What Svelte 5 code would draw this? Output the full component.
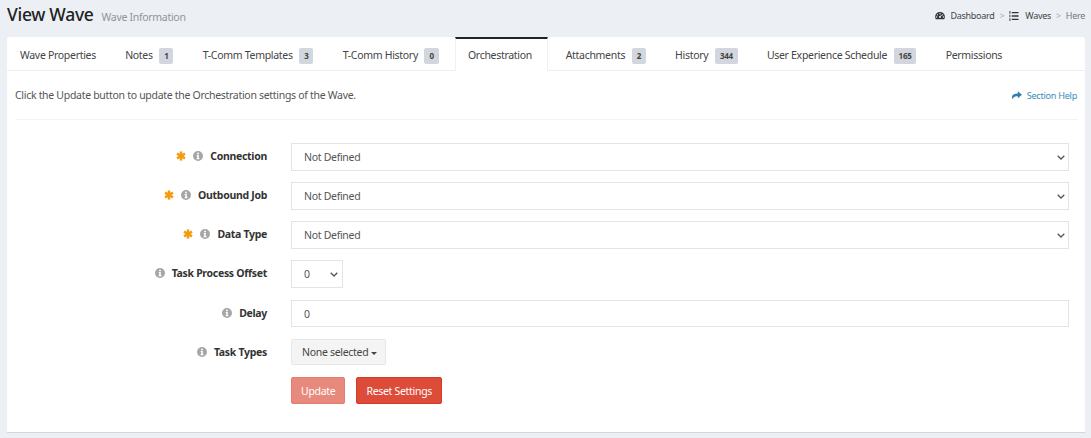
<script>
  const tabs = [
    { label: 'Wave Properties' },
    { label: 'Notes', count: 1 },
    { label: 'T-Comm Templates', count: 3 },
    { label: 'T-Comm History', count: 0 },
    { label: 'Orchestration', active: true },
    { label: 'Attachments', count: 2 },
    { label: 'History', count: 344 },
    { label: 'User Experience Schedule', count: 165 },
    { label: 'Permissions' }
  ];
</script>

{#snippet info()}
  <svg class="info" viewBox="0 0 10 10" aria-hidden="true">
    <path fill-rule="evenodd" d="M5 0a5 5 0 1 1 0 10A5 5 0 0 1 5 0zM4.100 1.700v1.500h1.800V1.700zM3.600 4.100v1h.6v2h-.6v1.100h2.800V7.100h-.6V4.100z" />
  </svg>
{/snippet}

{#snippet star()}
  <svg class="star" viewBox="0 0 12 12" aria-hidden="true">
    <g stroke="#f39c12" stroke-width="3">
      <line x1="6" y1="0.500" x2="6" y2="11.500" />
      <line x1="1.200" y1="3.200" x2="10.800" y2="8.800" />
      <line x1="1.200" y1="8.800" x2="10.800" y2="3.200" />
    </g>
  </svg>
{/snippet}

<div class="page">
  <header class="top">
    <div class="heading">
      <h1>View Wave</h1>
      <small>Wave Information</small>
    </div>
    <nav class="crumbs">
      <svg class="crumb-icon" viewBox="0 0 14 11" aria-hidden="true">
        <path fill-rule="evenodd" d="M7 .5a6.800 6.800 0 0 1 6.800 6.800c0 1.300-.3 2.400-.9 3.400H1.100C.5 9.700.2 8.600.2 7.300A6.800 6.800 0 0 1 7 .5zM7 2a1 1 0 1 0 0 2 1 1 0 0 0 0-2zM3.400 3.600a1 1 0 1 0 0 2 1 1 0 0 0 0-2zM10.600 3.600a1 1 0 1 0 0 2 1 1 0 0 0 0-2zM2.200 6.700a1 1 0 1 0 0 2 1 1 0 0 0 0-2zM11.800 6.700a1 1 0 1 0 0 2 1 1 0 0 0 0-2zM9.300 4.300 7.200 6.300a1.300 1.300 0 1 0 .9.900l1.700-2.500z" />
      </svg>
      <span class="crumb">Dashboard</span>
      <span class="sep">&gt;</span>
      <svg class="crumb-icon list" viewBox="0 0 10 11" aria-hidden="true">
        <path d="M0 0h1v3H0zM0 4h1v3H0zM0 8h1v3H0zM2.500 1H10v1.600H2.500zM2.500 4.700H10v1.600H2.500zM2.500 8.400H10V10H2.500z" />
      </svg>
      <span class="crumb">Waves</span>
      <span class="sep">&gt;</span>
      <span class="here">Here</span>
    </nav>
  </header>

  <section class="card">
    <ul class="tabs">
      {#each tabs as tab}
        <li class="tab" class:active={tab.active}>
          {tab.label}
          {#if tab.count !== undefined}
            <span class="badge">{tab.count}</span>
          {/if}
        </li>
      {/each}
    </ul>

    <div class="body">
      <div class="intro">
        <p>Click the Update button to update the Orchestration settings of the Wave.</p>
        <a class="help" href="#help">
          <svg viewBox="0 0 12 10" aria-hidden="true">
            <path d="M7 0l5 4.200L7 8.400V6C4 6 1.800 6.600.6 9.600.2 8.700 0 7.800 0 7c0-3 2.600-4.400 7-4.500z" />
          </svg>
          Section Help
        </a>
      </div>

      <form class="form">
        <div class="row">
          <div class="label">{@render star()}{@render info()}<label for="conn">Connection</label></div>
          <select id="conn" class="field"><option>Not Defined</option></select>
        </div>
        <div class="row">
          <div class="label">{@render star()}{@render info()}<label for="job">Outbound Job</label></div>
          <select id="job" class="field"><option>Not Defined</option></select>
        </div>
        <div class="row">
          <div class="label">{@render star()}{@render info()}<label for="type">Data Type</label></div>
          <select id="type" class="field"><option>Not Defined</option></select>
        </div>
        <div class="row">
          <div class="label">{@render info()}<label for="offset">Task Process Offset</label></div>
          <select id="offset" class="field small"><option>0</option></select>
        </div>
        <div class="row delay">
          <div class="label">{@render info()}<label for="delay">Delay</label></div>
          <input id="delay" class="field" value="0" />
        </div>
        <div class="row types">
          <div class="label">{@render info()}<span>Task Types</span></div>
          <button type="button" class="multi">None selected <span class="caret"></span></button>
        </div>
        <div class="row actions">
          <button type="button" class="btn disabled">Update</button>
          <button type="button" class="btn">Reset Settings</button>
        </div>
      </form>
    </div>
  </section>
</div>

<style>
  :global(body) {
    margin: 0;
    background: #ecf0f5;
  }
  .page {
    height: 438px;
    padding: 0 6px 0 7px;
    box-sizing: border-box;
    overflow: hidden;
    font-family: "Noto Sans", sans-serif;
    font-size: 10.5px;
    letter-spacing: -0.3px;
    color: #444;
  }
  .top {
    height: 37px;
    display: flex;
    justify-content: space-between;
    align-items: center;
    padding-bottom: 6px;
    box-sizing: border-box;
  }
  .heading {
    display: flex;
    align-items: baseline;
    gap: 8px;
    padding-bottom: 4px;
  }
  h1 {
    margin: 0;
    font-size: 17.5px;
    font-weight: 500;
    color: #222;
  }
  small {
    font-size: 10.5px;
    color: #8f949b;
  }
  .crumbs {
    display: flex;
    align-items: center;
    font-size: 9px;
    color: #444;
  }
  .crumb-icon {
    width: 10px;
    height: 9px;
    margin-right: 6px;
    fill: #333;
  }
  .crumb-icon.list {
    height: 10px;
  }
  .sep {
    color: #aaa;
    margin: 0 5px;
  }
  .here {
    color: #777;
  }
  .card {
    height: 396px;
    background: #fff;
    border-radius: 3px 3px 0 0;
    border-bottom: 1px solid #d2d6de;
    box-sizing: border-box;
  }
  .tabs {
    display: flex;
    gap: 3.2px;
    height: 34px;
    margin: 0;
    padding: 0;
    list-style: none;
    border-bottom: 1px solid #f0f0f0;
    box-sizing: border-box;
  }
  .tab {
    display: flex;
    align-items: center;
    gap: 6.5px;
    padding: 0 13px;
    border-top: 2px solid transparent;
    white-space: nowrap;
    color: #444;
  }
  .tab.active {
    padding: 0 15px 0 12px;
    margin-right: 1.5px;
    border-top-color: #222;
    border-left: 1px solid #f0f0f0;
    border-right: 1px solid #f0f0f0;
    background: #fff;
    height: 34px;
    box-sizing: border-box;
  }
  .badge {
    margin-top: 2px;
    padding: 2px 5px;
    border-radius: 2px;
    background: #d2d6de;
    font-size: 8px;
    font-weight: 700;
    color: #444;
    line-height: 12px;
  }
  .body {
    padding: 0 7px 0 8px;
  }
  .intro {
    height: 49px;
    display: flex;
    justify-content: space-between;
    align-items: center;
    border-bottom: 1px solid #f4f4f4;
    box-sizing: border-box;
  }
  p {
    margin: 0 0 1px;
    color: #555;
  }
  .help {
    display: flex;
    align-items: center;
    gap: 5px;
    margin-right: 1px;
    font-size: 9.2px;
    color: #3c8dbc;
    text-decoration: none;
  }
  .help svg {
    width: 10px;
    height: 9px;
    fill: #2f7fb0;
  }
  .form {
    display: flex;
    flex-direction: column;
    gap: 11px;
    padding-top: 23px;
  }
  .row {
    display: flex;
    align-items: center;
    gap: 24px;
    min-height: 28px;
    padding-right: 9px;
  }
  .label {
    flex: none;
    width: 252px;
    padding-bottom: 2px;
    box-sizing: border-box;
    display: flex;
    justify-content: flex-end;
    align-items: center;
    font-weight: 700;
    color: #333;
  }
  .info {
    width: 10px;
    height: 10px;
    margin-right: 7px;
    fill: #a6a6a6;
  }
  .star {
    width: 10px;
    height: 10px;
    margin-right: 7px;
  }
  .field {
    flex: 1;
    height: 28px;
    box-sizing: border-box;
    padding: 0 12px;
    border: 1px solid #e4e4e4;
    background: #fff;
    font: inherit;
    letter-spacing: inherit;
    color: #555;
    border-radius: 0;
    min-width: 0;
  }
  select.field {
    appearance: none;
    background: #fff url("data:image/svg+xml,%3Csvg xmlns='http://www.w3.org/2000/svg' width='8' height='5'%3E%3Cpath d='M.7.7 4 4l3.300-3.300' fill='none' stroke='%23555' stroke-width='1.300'/%3E%3C/svg%3E") no-repeat right 3px center;
  }
  select.small {
    flex: none;
    width: 52px;
    background-position: right 4px center;
  }
  .delay {
    margin-top: 1px;
  }
  .delay .field {
    height: 27px;
    align-self: flex-start;
  }
  .types {
    min-height: 26px;
  }
  .types .label {
    padding-bottom: 0;
  }
  .multi {
    height: 26px;
    padding: 0 8px 0 10px;
    border: 1px solid #e7e7e7;
    border-radius: 2px;
    background: #f4f4f4;
    font: inherit;
    letter-spacing: inherit;
    color: #444;
  }
  .caret {
    display: inline-block;
    border-top: 3px solid #444;
    border-left: 3px solid transparent;
    border-right: 3px solid transparent;
    vertical-align: middle;
  }
  .actions {
    padding-left: 276px;
    gap: 11px;
    min-height: 27px;
    margin-top: 1px;
  }
  .btn {
    height: 27px;
    padding: 0 9px;
    border: 1px solid #d73925;
    border-radius: 2px;
    background: #dd4b39;
    color: #fff;
    font: inherit;
    letter-spacing: inherit;
  }
  .btn.disabled {
    opacity: 0.65;
  }
</style>
